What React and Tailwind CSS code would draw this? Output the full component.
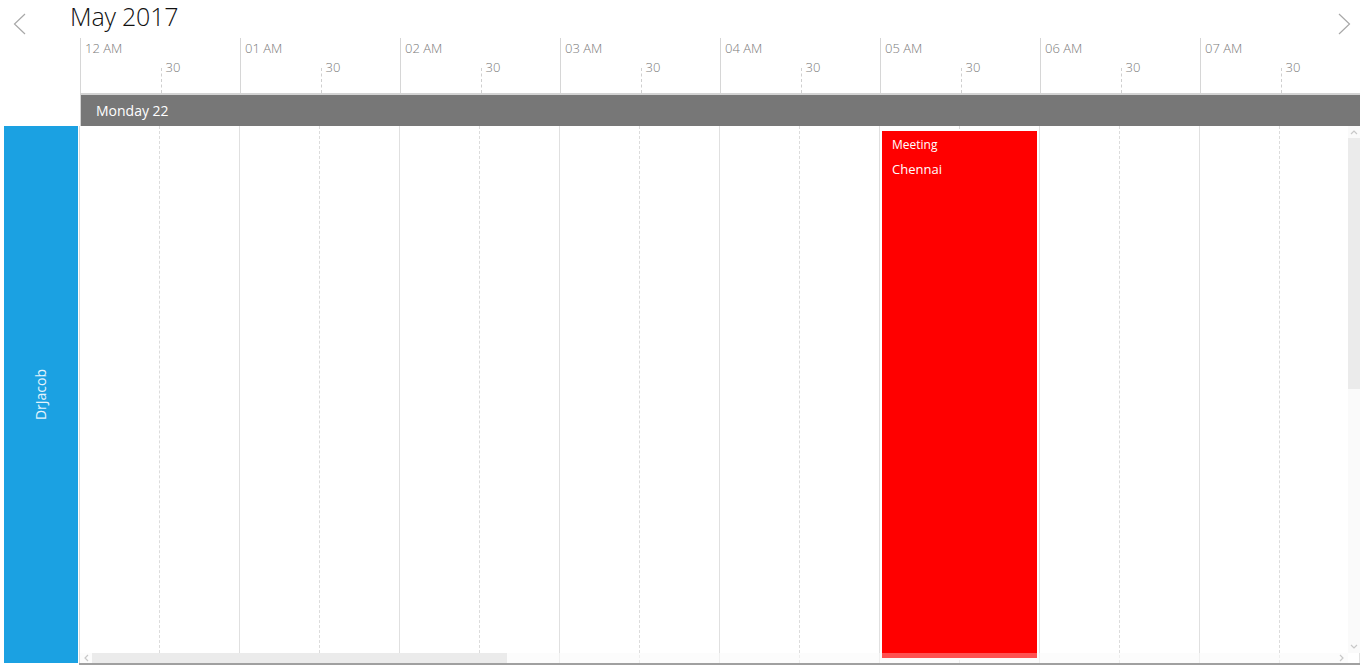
import React from "react";

const HOURS = ["12 AM", "01 AM", "02 AM", "03 AM", "04 AM", "05 AM", "06 AM", "07 AM"];

const Chevron = ({ dir = "left", className = "" }) => (
  <svg width="13" height="22" viewBox="0 0 13 22" className={className}>
    <path
      d={dir === "left" ? "M12 1 L1.5 11 L12 21" : "M1 1 L11.5 11 L1 21"}
      fill="none"
      stroke="#a8a8a8"
      strokeWidth="1.2"
    />
  </svg>
);

const TinyArrow = ({ d }) => (
  <svg width="8" height="6" viewBox="0 0 8 6">
    <path d={d} fill="none" stroke="#c8c8c8" strokeWidth="1.2" />
  </svg>
);

export default function App() {
  return (
    <div className="w-[1360px] h-[669px] bg-white overflow-hidden flex flex-col font-['Open_Sans',sans-serif]">
      {/* title row */}
      <div className="flex items-center h-[38px] shrink-0">
        <Chevron dir="left" className="ml-[13px] mt-[10px]" />
        <span className="ml-[44px] -mt-[5px] text-[25px] font-light text-[#111] leading-none tracking-[-0.2px]">May 2017</span>
        <Chevron dir="right" className="ml-auto mr-[9px] mt-[10px]" />
      </div>

      {/* time header */}
      <div className="flex h-[55px] shrink-0 overflow-hidden">
        <div className="w-[80px] shrink-0" />
        <div className="flex">
          {HOURS.map((h) => (
            <div key={h} className="w-[160px] shrink-0 flex border-l border-[#d6d6d6]">
              <div className="w-[80px] pl-[4px] pt-[2px] text-[13px] leading-[16px] text-[#7a7a7a] font-light">{h}</div>
              <div className="w-[80px] flex flex-col pt-[21px]">
                <span className="pl-[5px] text-[13px] leading-[16px] text-[#7a7a7a] font-light">30</span>
                <div className="flex-1 -mt-[7px] border-l border-dashed border-[#cfcfcf]" />
              </div>
            </div>
          ))}
        </div>
      </div>

      {/* day bar */}
      <div className="ml-[80px] h-[33px] shrink-0 bg-[#777777] border-t-2 border-l border-[#d3d3d3] flex items-center pl-[15px]">
        <span className="text-[14px] text-white">Monday 22</span>
      </div>

      {/* body */}
      <div className="flex flex-1 min-h-0">
        <div className="ml-[4px] w-[74px] mb-[6px] bg-[#1ba1e2] flex items-center justify-center shrink-0">
          <span className="-rotate-90 whitespace-nowrap text-[14px] text-[#e4f4fc]">DrJacob</span>
        </div>
        <div className="flex-1 ml-[1px] mb-[4px] flex flex-col min-w-0">
          <div className="flex-1 relative border-l border-[#dcdcdc] overflow-hidden">
            <div className="flex h-full">
              {HOURS.map((h) => (
                <div key={h} className="w-[160px] shrink-0 flex border-r border-[#e0e0e0]">
                  <div className="w-[80px] border-r border-dashed border-[#dcdcdc]" />
                  <div className="w-[80px]" />
                </div>
              ))}
            </div>

            {/* appointment */}
            <div className="absolute left-[802px] top-[5px] w-[155px] h-[527px] bg-[#ff0000] z-10 flex flex-col">
              <div className="pl-[10px] pt-[5px] text-white">
                <div className="text-[12px] leading-[18px]">Meeting</div>
                <div className="text-[13px] leading-[18px] mt-[6px]">Chennai</div>
              </div>
              <div className="mt-auto h-[5px] bg-[#ff5050]" />
            </div>

            {/* vertical scrollbar */}
            <div className="absolute right-0 top-0 bottom-[10px] w-[12px] bg-[#fafafa] flex flex-col items-center">
              <div className="h-[12px] flex items-center justify-center">
                <TinyArrow d="M1 5 L4 2 L7 5" />
              </div>
              <div className="w-full h-[251px] bg-[#ebebeb]" />
              <div className="mt-auto h-[12px] flex items-center justify-center">
                <TinyArrow d="M1 1 L4 4 L7 1" />
              </div>
            </div>

            {/* horizontal scrollbar */}
            <div className="absolute left-0 right-[12px] bottom-0 h-[10px] bg-[#fafafa]/60 flex items-center">
              <div className="w-[12px] flex items-center justify-center">
                <svg width="6" height="8" viewBox="0 0 6 8">
                  <path d="M5 1 L2 4 L5 7" fill="none" stroke="#c8c8c8" strokeWidth="1.2" />
                </svg>
              </div>
              <div className="w-[415px] h-full bg-[#ebebeb]" />
              <div className="ml-auto w-[12px] flex items-center justify-center">
                <svg width="6" height="8" viewBox="0 0 6 8">
                  <path d="M1 1 L4 4 L1 7" fill="none" stroke="#c8c8c8" strokeWidth="1.2" />
                </svg>
              </div>
            </div>
          </div>
          <div className="h-[2px] bg-[#a0a0a0] shrink-0" />
        </div>
      </div>
    </div>
  );
}
